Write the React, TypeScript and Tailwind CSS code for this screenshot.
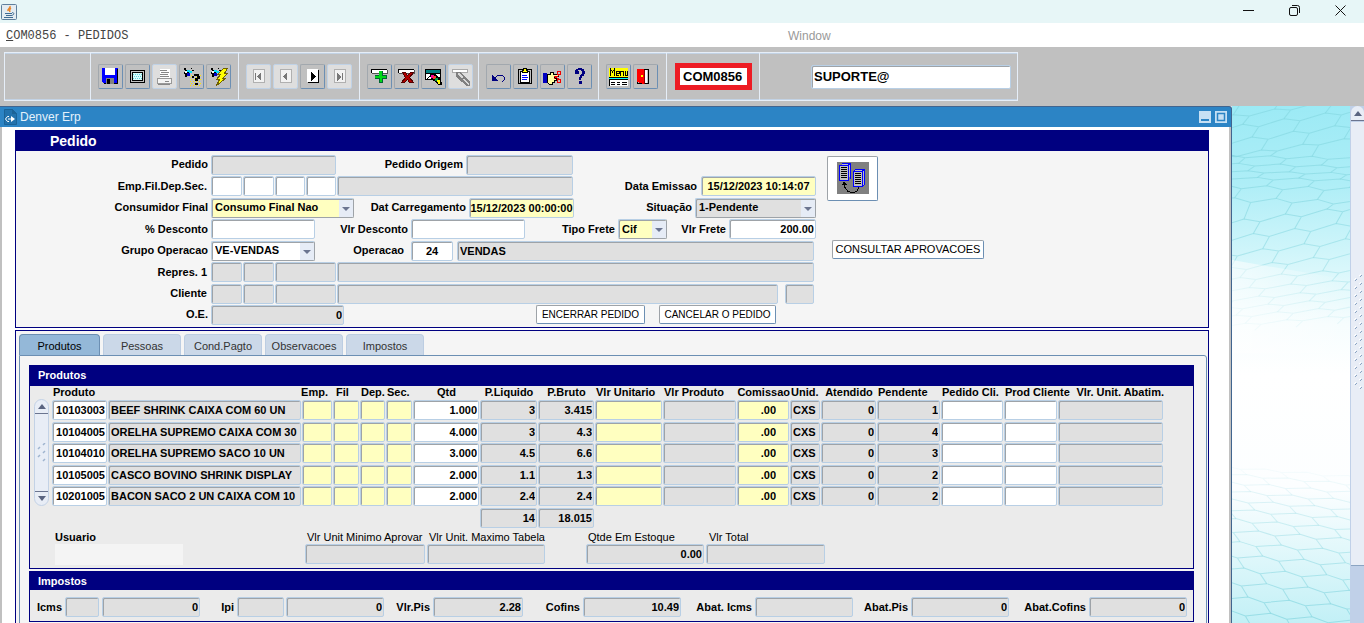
import { useState } from 'react';
import type { ReactNode } from 'react';
import clsx from 'clsx';

const fieldBase =
  'h-5 min-w-0 shrink-0 rounded-[2px] border border-[#b8cfe5] shadow-[inset_1px_1px_0_#9ea3a8] text-[11px] font-bold text-black outline-none';

const tones = {
  white: 'bg-white',
  gray: 'bg-[#e0e0e0]',
  yellow: 'bg-[#ffffc0]',
};

type FieldProps = {
  label: string;
  id?: string;
  value?: string;
  tone?: keyof typeof tones;
  className?: string;
};

function Field({ label, id, value = '', tone = 'gray', className }: FieldProps) {
  return (
    <input
      id={id}
      aria-label={id ? undefined : label}
      defaultValue={value}
      readOnly={tone === 'gray'}
      className={clsx(fieldBase, tones[tone], className)}
    />
  );
}

function Label({ htmlFor, className, children }: { htmlFor: string; className?: string; children: ReactNode }) {
  return (
    <label htmlFor={htmlFor} className={clsx('shrink-0 whitespace-nowrap pr-[3px] text-right text-[11px] font-bold', className)}>
      {children}
    </label>
  );
}

function Select({ id, value, tone = 'white', className }: { id: string; value: string; tone?: keyof typeof tones; className?: string }) {
  return (
    <div className={clsx('relative shrink-0', className)}>
      <select id={id} className={clsx(fieldBase, tones[tone], 'block w-full appearance-none border-r-[#9ea3a8] border-b-[#9ea3a8] pl-[3px]')}>
        <option>{value}</option>
      </select>
      <svg className="pointer-events-none absolute top-[2px] right-px h-[17px] w-[14px]" viewBox="0 0 14 17">
        <path fill="#e6ecf6" d="M0 0h14v17H0z" />
        <path fill="#6b7590" d="M3 7h8l-4 4z" />
      </svg>
    </div>
  );
}

function PushButton({ children, className }: { children: ReactNode; className?: string }) {
  return (
    <button className={clsx('h-[19px] shrink-0 rounded-[2px] border border-[#9ea3a8] border-r-[#6c8fb3] border-b-[#6c8fb3] bg-white whitespace-nowrap', className)}>
      {children}
    </button>
  );
}

/* ---------- toolbar ---------- */

const torch = (
  <>
    <path fill="#000" d="M4 3h2v2h2v1h3v2h-2v2H7v2H5V9H4V7h1V5H4z" />
    <path fill="#00e0ff" d="M7 5h3v1h2v2H9V7H7z" />
    <path fill="#0000c8" d="M7 8h3v3H7z" />
    <path fill="#fff" d="M5 6h2v2H5z" />
    <path fill="#000" d="M11 3h1v1h-1zM12 5h2v1h-2z" />
  </>
);

const record = (
  <>
    <path fill="#fff" d="M4 5h15v3H4z" />
    <path fill="none" stroke="#000" d="M3.500 8V4.500H19" />
    <path fill="none" stroke="#555" d="M4 8.500h15V5" />
  </>
);

const icons: Record<string, ReactNode> = {
  Salvar: (
    <>
      <path fill="#00f" d="M3 3h16v16H5l-2-2z" />
      <path fill="#000" d="M18 4h1v15H5v-1h13z" />
      <path fill="#fff" d="M6 3h10v7H6z" />
      <path fill="#808080" d="M7 13h8v6H7z" />
      <path fill="#000" d="M8 14h3v5H8z" />
    </>
  ),
  Tela: (
    <>
      <path fill="#c0c0c0" stroke="#000" d="M4.500 5.500h14v12h-14z" />
      <path fill="#d8fcfc" stroke="#000" d="M6.500 7.500h10v8h-10z" />
      <path stroke="#60d0dc" strokeDasharray="1 1" d="M7 9.500h9M8 11.500h8M7 13.500h9" />
    </>
  ),
  Imprimir: (
    <>
      <path fill="#fff" d="M7 4h10v9H7z" />
      <path stroke="#888" fill="none" d="M7 5.500h7M8 7.500h8M7 9.500h8M7 11.500h9" />
      <path fill="#f4f4f4" stroke="#999" d="M4.500 13.500h14v5h-14z" />
      <path stroke="#888" d="M12 16.500h4M5 19.500h12" />
    </>
  ),
  'Entrar consulta': (
    <>
      {torch}
      <path stroke="#ffe800" strokeDasharray="1 2" d="M11 10.500h11M10 12.500h12M11 14.500h11M10 16.500h12M11 18.500h11M10 20.500h12" />
      <path fill="#000" d="M12 11h2V9h5v2h1v3h-2v2h-3v-3h2v-2h-3v2h-2zM15 18h3v2h-3z" />
    </>
  ),
  'Executar consulta': (
    <>
      {torch}
      <path fill="#ff0" stroke="#706000" d="M16.500 3.500h4l-3 5h3l-5 5h3l-9 7 3-6h-3l4-5h-3z" />
    </>
  ),
  Primeiro: (
    <>
      <path fill="#f2f2f2" stroke="#b0b0b0" d="M6.500 4.500h11v13h-11z" />
      <path fill="#777" d="M8 8h1v7H8zM14 7v9l-4-4z" />
    </>
  ),
  Anterior: (
    <>
      <path fill="#f2f2f2" stroke="#b0b0b0" d="M6.500 4.500h11v13h-11z" />
      <path fill="#777" d="M13 7v9l-4-4z" />
    </>
  ),
  Seguinte: (
    <>
      <path fill="#fff" d="M6 4h11v13H6z" />
      <path stroke="#000" fill="none" d="M7 17.500h10.500V5" />
      <path fill="#000" d="M10 7v9l5-4z" />
    </>
  ),
  Ultimo: (
    <>
      <path fill="#f2f2f2" stroke="#b0b0b0" d="M6.500 4.500h11v13h-11z" />
      <path fill="#777" d="M14 8h1v7h-1zM9 7v9l4-4z" />
    </>
  ),
  Inserir: (
    <>
      {record}
      <path fill="#063" d="M11 6h4v4h4v4h-4v4h-4v-4H7v-4h4z" />
      <path fill="#00d818" d="M11 6h3v5h4v2h-4v4h-2v-4H7v-2h4z" />
    </>
  ),
  Remover: (
    <>
      {record}
      <path fill="#b00000" stroke="#500" d="M7.500 7.500h3l2 3 3-3h3l-4 5 4 5h-4l-2-3-3 3h-3l4-5z" />
    </>
  ),
  Bloquear: (
    <>
      <path fill="#fff" stroke="#000" d="M3.500 4.500h15v10h-15z" />
      <path fill="#008080" d="M4 5h14v3H4z" />
      <path stroke="#000" fill="none" d="M4 8.500h14M5 14l5-5" />
      <path fill="#000" d="M8 9h6l2 3 3 1 1 7h-4l-3-4-4-1z" />
      <path fill="#ff00a0" d="M9 10h3v3H9z" />
      <path fill="#f33" d="M11 11h3v3h-3z" />
      <path fill="#00a040" d="M13 13h3v3h-3z" />
      <path fill="#ff0" d="M15 15h3v4h-2z" />
    </>
  ),
  Limpar: (
    <>
      <path fill="#fff" stroke="#aaa" d="M3.500 4.500h15v3h-15z" />
      <path fill="#808080" d="M7 7h5l9 10v4h-3L7 12z" />
      <path fill="#d8d8d8" d="M9 8h2l3 4-1 1-4-3zM14 14l1-1 5 6v1h-1z" />
    </>
  ),
  Desfazer: (
    <>
      <path stroke="#000080" fill="none" d="M8 13l3-3h4l2 2v3l-2 2" />
      <path fill="#000080" d="M5 10v6h6v-1l-2-1-3-4z" />
    </>
  ),
  Colar: (
    <>
      <rect x="4.500" y="4.500" width="13" height="14" rx="1" fill="#c0c0c0" stroke="#000" />
      <path fill="#fff" stroke="#000" d="M6.500 6.500h9v11h-9z" />
      <path fill="#ff0" stroke="#000" d="M8.500 5.500h1v-2h3v2h1v2h-5z" />
      <path stroke="#00f" d="M8 10.500h5M8 12.500h6M8 14.500h5" />
    </>
  ),
  Recortar: (
    <>
      <path fill="#0000c0" d="M2 8h4v10H2z" />
      <path fill="#ffffa0" stroke="#000" d="M6.500 9.500h3v-2h3v2h5v2h-4v2h2v2h-2v2h-2v2h-3l-2-2z" />
      <path stroke="#e00" fill="none" d="M13 11l5 3M13 14l5-4" />
      <circle cx="18" cy="8" r="2" fill="none" stroke="#e00" />
      <circle cx="18" cy="16" r="2" fill="none" stroke="#e00" />
    </>
  ),
  Ajuda: <path fill="#000080" d="M7 9V5h1V4h2V3h4v1h2v2h1v3h-1v2h-2v2h-1v2h-2v-3h1v-2h1V9h1V6h-1V5h-3v1h1v3zM11 16h3v3h-3z" />,
  Menu: (
    <>
      <path fill="#ff0" d="M2 3h19v9H2z" />
      <path fill="none" stroke="#000" d="M3.500 11V4l2 3 2-3v7M9 8.500h3v-2H9.500v4H12M13.500 11V6.500h3V11M18.500 6v4.500h2V6" />
      <path fill="#fff" d="M2 14h19v7H2z" />
      <path stroke="#0ff" d="M2 13.500h19" />
      <path stroke="#000" d="M2 12.500h19M2 14.500h19M2.500 15v6M4 17.500h4M10 17.500h3M15 17.500h5M4 19.500h4M10 19.500h3M15 19.500h5" />
    </>
  ),
  Sair: (
    <>
      <path fill="#c0c0c0" stroke="#000" d="M3.500 4.500h11v14h-11z" />
      <path fill="#fff" d="M11 5h2v13h-2z" />
      <path fill="red" d="M3 4h7v15l-7-2z" />
      <path stroke="#800" d="M10.500 5v14" />
      <path fill="#ff0" d="M7 10h2v2H7z" />
    </>
  ),
};

const toolGroups = [
  { width: 'w-[148px]', names: ['Salvar', 'Tela', 'Imprimir', 'Entrar consulta', 'Executar consulta'] },
  { width: 'w-[121px]', names: ['Primeiro', 'Anterior', 'Seguinte', 'Ultimo'] },
  { width: 'w-[119px]', names: ['Inserir', 'Remover', 'Bloquear', 'Limpar'] },
  { width: 'w-[120px]', names: ['Desfazer', 'Colar', 'Recortar', 'Ajuda'] },
  { width: 'w-[68px]', names: ['Menu', 'Sair'] },
];

const disabledTools = ['Imprimir', 'Primeiro', 'Anterior', 'Ultimo', 'Limpar'];

function Toolbar() {
  return (
    <div className="h-[59px] shrink-0 bg-[#c0c0c0] px-1 pt-[5px]">
      <div className="flex h-[49px] w-fit items-stretch divide-x divide-[#e6eef8] border border-[#e6eef8] shadow-[inset_0_1px_0_#c2d2e4,inset_0_-1px_0_#c2d2e4]">
        <div className="w-[86px]" />
        {toolGroups.map((group) => (
          <div key={group.names[0]} className={clsx('flex items-center gap-[2px] pl-[7px]', group.width)}>
            {group.names.map((name) => {
              const disabled = disabledTools.includes(name);
              return (
                <button
                  key={name}
                  title={name}
                  disabled={disabled}
                  className={clsx(
                    'size-[25px] shrink-0 rounded-[2px] border',
                    disabled
                      ? 'border-[#c0d2e6] bg-[#dedede]'
                      : 'border-[#a2a8ae] border-r-[#6c8fb3] border-b-[#6c8fb3] bg-[#c0c0c0]'
                  )}
                >
                  <svg viewBox="0 0 23 23" className="size-[23px]" shapeRendering="crispEdges">
                    {icons[name]}
                  </svg>
                </button>
              );
            })}
          </div>
        ))}
        <div className="flex w-[93px] items-center pl-2">
          <input
            aria-label="Programa"
            defaultValue="COM0856"
            className="h-[27px] w-[77px] border-5 border-[#ed1c24] bg-white pl-[3px] text-[13px] font-bold outline-none"
          />
        </div>
        <div className="flex w-[257px] items-center justify-end pr-[6px]">
          <input
            aria-label="Usuario conectado"
            defaultValue="SUPORTE@"
            className="h-6 w-[200px] rounded-[2px] border border-[#b8cfe5] bg-white pl-[2px] text-[13px] font-bold shadow-[inset_1px_1px_0_#9ea3a8] outline-none"
          />
        </div>
      </div>
    </div>
  );
}

/* ---------- order form ---------- */

function OrderForm() {
  return (
    <section className="border border-[#000080] bg-[#f5f5f5]">
      <h1 className="h-5 bg-[#000080] pl-[34px] text-[14px] leading-5 font-bold text-white">Pedido</h1>
      <div className="flex h-[176px] pt-[3px]">
        <div className="grid w-[800px] shrink-0 content-start grid-rows-[21px_22px_21px_22px_21px_22px_21px_21px]">
          <div className="flex items-center">
            <Label htmlFor="pedido" className="w-[195px]">Pedido</Label>
            <Field id="pedido" label="Pedido" className="w-[125px]" />
            <Label htmlFor="origem" className="w-[130px]">Pedido Origem</Label>
            <Field id="origem" label="Pedido Origem" className="w-[107px]" />
          </div>
          <div className="flex items-center gap-px">
            <Label htmlFor="emp" className="w-[194px]">Emp.Fil.Dep.Sec.</Label>
            <Field id="emp" label="Empresa" tone="white" className="w-[31px]" />
            <Field label="Filial" tone="white" className="w-[31px]" />
            <Field label="Deposito" tone="white" className="w-[30px]" />
            <Field label="Secao" tone="white" className="w-[30px]" />
            <Field label="Descricao da filial" className="w-[236px]" />
            <Label htmlFor="emissao" className="w-[126px]">Data Emissao</Label>
            <Field id="emissao" label="Data Emissao" tone="yellow" value="15/12/2023 10:14:07" className="w-[115px] text-center" />
          </div>
          <div className="flex items-center">
            <Label htmlFor="consumidor" className="w-[195px]">Consumidor Final</Label>
            <Select id="consumidor" tone="yellow" value="Consumo Final Nao" className="w-[143px]" />
            <Label htmlFor="carregamento" className="w-[115px]">Dat Carregamento</Label>
            <Field id="carregamento" label="Dat Carregamento" tone="yellow" value="15/12/2023 00:00:00" className="w-[105px] text-center" />
            <Label htmlFor="situacao" className="w-[121px]">Situação</Label>
            <Select id="situacao" tone="gray" value="1-Pendente" className="w-[121px]" />
          </div>
          <div className="flex items-center">
            <Label htmlFor="desconto" className="w-[195px]">% Desconto</Label>
            <Field id="desconto" label="% Desconto" tone="white" className="w-[104px]" />
            <Label htmlFor="vlrdesconto" className="w-[96px]">Vlr Desconto</Label>
            <Field id="vlrdesconto" label="Vlr Desconto" tone="white" className="w-[114px]" />
            <Label htmlFor="tipofrete" className="w-[93px]">Tipo Frete</Label>
            <Select id="tipofrete" tone="yellow" value="Cif" className="w-[49px]" />
            <Label htmlFor="vlrfrete" className="w-[62px]">Vlr Frete</Label>
            <Field id="vlrfrete" label="Vlr Frete" tone="white" value="200.00" className="w-[87px] pr-px text-right" />
          </div>
          <div className="flex items-center">
            <Label htmlFor="grupo" className="w-[195px]">Grupo Operacao</Label>
            <Select id="grupo" value="VE-VENDAS" className="w-[104px]" />
            <Label htmlFor="operacao" className="mr-1 w-[92px]">Operacao</Label>
            <Field id="operacao" label="Operacao" tone="white" value="24" className="mr-1 w-[42px] text-center" />
            <Field label="Descricao da operacao" value="VENDAS" className="w-[357px] pl-[2px]" />
          </div>
          <div className="flex items-center gap-px">
            <Label htmlFor="repres" className="w-[194px]">Repres. 1</Label>
            <Field id="repres" label="Repres. 1" className="w-[31px]" />
            <Field label="Filial do representante" className="w-[31px]" />
            <Field label="Codigo do representante" className="w-[61px]" />
            <Field label="Nome do representante" className="w-[477px]" />
          </div>
          <div className="flex items-center gap-px">
            <Label htmlFor="cliente" className="w-[194px]">Cliente</Label>
            <Field id="cliente" label="Cliente" className="w-[31px]" />
            <Field label="Filial do cliente" className="w-[31px]" />
            <Field label="Codigo do cliente" className="w-[61px]" />
            <Field label="Nome do cliente" className="mr-[6px] w-[441px]" />
            <Field label="UF do cliente" className="w-[29px]" />
          </div>
          <div className="flex items-center">
            <Label htmlFor="oe" className="w-[195px]">O.E.</Label>
            <Field id="oe" label="O.E." value="0" className="mr-48 w-[133px] pr-px text-right" />
            <PushButton className="mr-[14px] w-[109px] text-[10px]">ENCERRAR PEDIDO</PushButton>
            <PushButton className="w-[117px] text-[10px]">CANCELAR O PEDIDO</PushButton>
          </div>
        </div>
        <div className="flex flex-col items-start pt-[2px] pl-[11px]">
          <button title="Copiar pedido" className="mb-[39px] flex h-[45px] w-[51px] justify-center rounded-[2px] border border-[#9ea3a8] border-r-[#6c8fb3] border-b-[#6c8fb3] bg-white pt-[5px]">
            <svg viewBox="0 0 32 32" className="size-8" shapeRendering="crispEdges">
              <path fill="#808080" d="M0 0h32v32H0z" />
              <path fill="#c0c0c0" stroke="#00f" d="M4.500 1.500h9v15M16.500 9.500l2-2h9v15l-2 2" />
              <path fill="#c0c0c0" stroke="#00f" d="M2.500 3.500h9v15h-9zM16.500 9.500h9v15h-9z" />
              <path stroke="#00f" d="M11 3.500l2-2M25 9.500l2-2" />
              <path stroke="#000" d="M4 5.500h6M4 7.500h6M4 9.500h6M4 11.500h6M4 13.500h6M4 15.500h6M18 11.500h6M18 13.500h6M18 15.500h6M18 17.500h6M18 19.500h6M18 21.500h6" />
              <path stroke="#000" fill="none" d="M7.500 20v5l3 4 4 1.500h3l3-2 1-3" />
              <path fill="#000" d="M7 19l3 4H5z" />
            </svg>
          </button>
          <PushButton className="ml-[5px] w-[152px] text-[11px]">CONSULTAR APROVACOES</PushButton>
        </div>
      </div>
    </section>
  );
}

/* ---------- products ---------- */

const columns: { title: string; width: string; tone: keyof typeof tones; align: string; head?: string }[] = [
  { title: 'Produto', width: 'w-[56px]', tone: 'white', align: 'pr-px text-right' },
  { title: '', width: 'w-[194px]', tone: 'gray', align: 'pl-[2px]' },
  { title: 'Emp.', width: 'w-[31px]', tone: 'yellow', align: '', head: 'justify-end pr-[5px]' },
  { title: 'Fil', width: 'w-[27px]', tone: 'yellow', align: '', head: 'pl-[3px]' },
  { title: 'Dep.', width: 'w-[26px]', tone: 'yellow', align: '' },
  { title: 'Sec.', width: 'w-[27px]', tone: 'yellow', align: '' },
  { title: 'Qtd', width: 'w-[67px]', tone: 'white', align: 'pr-px text-right', head: 'justify-center' },
  { title: 'P.Liquido', width: 'w-[58px]', tone: 'gray', align: 'pr-px text-right', head: 'justify-center' },
  { title: 'P.Bruto', width: 'w-[57px]', tone: 'gray', align: 'pr-px text-right', head: 'justify-center' },
  { title: 'Vlr Unitario', width: 'w-[68px]', tone: 'yellow', align: '' },
  { title: 'Vlr Produto', width: 'w-[74px]', tone: 'gray', align: '' },
  { title: 'Comissao', width: 'w-[53px]', tone: 'yellow', align: 'text-right pr-3', head: 'justify-end' },
  { title: 'Unid.', width: 'w-[31px]', tone: 'gray', align: 'pl-[2px]' },
  { title: 'Atendido', width: 'w-[56px]', tone: 'gray', align: 'pr-px text-right', head: 'justify-center' },
  { title: 'Pendente', width: 'w-[64px]', tone: 'gray', align: 'pr-px text-right' },
  { title: 'Pedido Cli.', width: 'w-[63px]', tone: 'white', align: '' },
  { title: 'Prod Cliente', width: 'w-[54px]', tone: 'white', align: '' },
  { title: 'Vlr. Unit. Abatim.', width: 'w-[106px]', tone: 'gray', align: '', head: 'justify-end' },
];

const products = [
  ['10103003', 'BEEF SHRINK CAIXA COM 60 UN', '', '', '', '', '1.000', '3', '3.415', '', '', '.00', 'CXS', '0', '1', '', '', ''],
  ['10104005', 'ORELHA SUPREMO CAIXA COM 30', '', '', '', '', '4.000', '3', '4.3', '', '', '.00', 'CXS', '0', '4', '', '', ''],
  ['10104010', 'ORELHA SUPREMO SACO 10 UN', '', '', '', '', '3.000', '4.5', '6.6', '', '', '.00', 'CXS', '0', '3', '', '', ''],
  ['10105005', 'CASCO BOVINO SHRINK DISPLAY', '', '', '', '', '2.000', '1.1', '1.3', '', '', '.00', 'CXS', '0', '2', '', '', ''],
  ['10201005', 'BACON SACO 2 UN CAIXA COM 10', '', '', '', '', '2.000', '2.4', '2.4', '', '', '.00', 'CXS', '0', '2', '', '', ''],
];

function GridScroll() {
  return (
    <div className="mt-[13px] mr-[3px] flex h-[107px] w-[15px] shrink-0 flex-col justify-between rounded-full border border-[#c3d2e6] bg-[#e8edf6]">
      <button aria-label="Subir" className="flex h-[14px] items-center justify-center border-b border-[#6b7590]">
        <svg viewBox="0 0 8 5" className="h-[5px] w-2"><path fill="#5a6480" d="M0 5h8L4 0z" /></svg>
      </button>
      <svg viewBox="0 0 12 20" className="h-5 w-3" stroke="#9fb4cf" strokeWidth="1.500">
        <path d="M8 2l2-2M3 6l2-2M8 10l2-2M3 14l2-2M8 18l2-2" />
      </svg>
      <button aria-label="Descer" className="flex h-[14px] items-center justify-center border-t border-[#6b7590]">
        <svg viewBox="0 0 8 5" className="h-[5px] w-2"><path fill="#5a6480" d="M0 0h8L4 5z" /></svg>
      </button>
    </div>
  );
}

function Products() {
  return (
    <section className="border border-[#000080] bg-[#ebebeb]">
      <h2 className="h-5 bg-[#000080] pl-2 text-[11px] leading-[18px] font-bold text-white">Produtos</h2>
      <div className="flex pl-1">
        <GridScroll />
        <table className="w-[1112px] shrink-0 table-fixed border-collapse">
          <thead>
            <tr className="h-[14px]">
              {columns.map((col) => (
                <th key={col.title} className={clsx('p-0 text-[11px] leading-[13px] font-bold whitespace-nowrap', col.width)}>
                  <div className={clsx('flex h-[14px] w-full', col.head ?? 'pl-px')}>{col.title}</div>
                </th>
              ))}
            </tr>
          </thead>
          <tbody>
            {products.map((row) => (
              <tr key={row[0]} className="odd:h-[22px] even:h-[21px]">
                {row.map((value, i) => (
                  <td key={i} className="p-0 pr-px align-top">
                    <Field
                      label={columns[i].title || 'Descricao'}
                      tone={columns[i].tone}
                      value={value}
                      className={clsx('block w-full', columns[i].align)}
                    />
                  </td>
                ))}
              </tr>
            ))}
          </tbody>
          <tfoot>
            <tr className="h-[22px]">
              <td colSpan={7} />
              <td className="p-0 pr-px align-top"><Field label="Total P.Liquido" value="14" className="block w-full pr-px text-right" /></td>
              <td className="p-0 pr-px align-top"><Field label="Total P.Bruto" value="18.015" className="block w-full pr-px text-right" /></td>
              <td colSpan={9} />
            </tr>
          </tfoot>
        </table>
      </div>
      <div className="flex pb-[3px] pl-[25px] text-[11px] leading-[14px]">
        <div className="mr-[122px] w-32">
          <div className="font-bold">Usuario</div>
          <div className="h-[21px] bg-[#f4f4f4]" />
        </div>
        <div className="mr-[2px] flex w-[120px] flex-col">
          <label htmlFor="minimo" className="pl-[2px] whitespace-nowrap">Vlr Unit Minimo Aprovar</label>
          <Field id="minimo" label="Vlr Unit Minimo Aprovar" />
        </div>
        <div className="mr-[41px] flex w-[118px] flex-col">
          <label htmlFor="maximo" className="pl-[2px] whitespace-nowrap">Vlr Unit. Maximo Tabela</label>
          <Field id="maximo" label="Vlr Unit. Maximo Tabela" />
        </div>
        <div className="mr-[2px] flex w-[118px] flex-col">
          <label htmlFor="estoque" className="pl-[2px]">Qtde Em Estoque</label>
          <Field id="estoque" label="Qtde Em Estoque" value="0.00" className="pr-px text-right" />
        </div>
        <div className="flex w-[119px] flex-col">
          <label htmlFor="total" className="pl-[3px]">Vlr Total</label>
          <Field id="total" label="Vlr Total" />
        </div>
      </div>
    </section>
  );
}

function Taxes() {
  return (
    <section className="mt-[2px] border border-[#000080] bg-[#ebebeb]">
      <h2 className="h-[18px] bg-[#000080] pl-2 text-[11px] leading-[18px] font-bold text-white">Impostos</h2>
      <div className="flex h-[31px] items-center pt-[3px]">
        <Label htmlFor="icms" className="w-[35px]">Icms</Label>
        <Field id="icms" label="Icms" className="mr-[3px] w-[34px]" />
        <Field label="Valor Icms" value="0" className="w-[98px] pr-px text-right" />
        <Label htmlFor="ipi" className="w-[37px]">Ipi</Label>
        <Field id="ipi" label="Ipi" className="mr-[2px] w-[47px]" />
        <Field label="Valor Ipi" value="0" className="w-[98px] pr-px text-right" />
        <Label htmlFor="pis" className="w-[49px]">Vlr.Pis</Label>
        <Field id="pis" label="Vlr.Pis" value="2.28" className="w-[90px] pr-px text-right" />
        <Label htmlFor="cofins" className="w-[60px]">Cofins</Label>
        <Field id="cofins" label="Cofins" value="10.49" className="w-[98px] pr-px text-right" />
        <Label htmlFor="abicms" className="w-[74px]">Abat. Icms</Label>
        <Field id="abicms" label="Abat. Icms" className="w-[98px]" />
        <Label htmlFor="abpis" className="w-[58px]">Abat.Pis</Label>
        <Field id="abpis" label="Abat.Pis" value="0" className="w-[98px] pr-px text-right" />
        <Label htmlFor="abcofins" className="w-[80px]">Abat.Cofins</Label>
        <Field id="abcofins" label="Abat.Cofins" value="0" className="w-[98px] pr-px text-right" />
      </div>
    </section>
  );
}

const tabs = [
  { name: 'Produtos', width: 'w-[81px]' },
  { name: 'Pessoas', width: 'w-[78px]' },
  { name: 'Cond.Pagto', width: 'w-[78px]' },
  { name: 'Observacoes', width: 'w-[78px]' },
  { name: 'Impostos', width: 'w-[78px]' },
];

function Details() {
  const [active, setActive] = useState('Produtos');

  return (
    <section className="mt-[2px] flex-1 border border-b-0 border-[#000080] bg-[#f5f5f5] px-[3px] pt-[3px]">
      <div role="tablist" className="flex gap-[3px]">
        {tabs.map((tab) => (
          <button
            key={tab.name}
            role="tab"
            aria-selected={active === tab.name}
            onClick={() => setActive(tab.name)}
            className={clsx(
              'h-[21px] rounded-t-[4px] border border-b-0 pt-[2px] text-[11px]',
              tab.width,
              active === tab.name ? 'border-[#6c8fb3] bg-[#94b8d8] text-black' : 'border-[#bccde2] bg-[#cbd8e8] text-[#333]'
            )}
          >
            {tab.name}
          </button>
        ))}
      </div>
      <div className="-mr-[2px] h-full rounded-tr-[3px] border border-[#6c8fb3] pt-[9px] pr-[12px] pl-[9px]">
        <Products />
        <Taxes />
      </div>
    </section>
  );
}

/* ---------- desktop ---------- */

const upperRows = [-20, 20, 53, 95, 138, 168, 193, 215, 234, 258, 296, 340, 386, 436, 480, 520, 552, 580, 606, 632, 658, 682];
const lowerRows = [1112, 1134, 1158, 1184, 1210, 1238, 1268, 1300, 1336, 1374, 1414, 1456, 1500, 1544, 1590];

// one zigzag per row, its low corners tied to the high corners of the next row
function honeycomb(rows: number[], tiltAt: (y: number) => number, lean: number) {
  const period = 124;
  const cell = 48;
  let start = -240;

  return rows.slice(0, -1).map((y, r) => {
    const next = rows[r + 1];
    const drop = (next - y) * 0.3;
    const at = (rowY: number, x: number) => Math.round(rowY + tiltAt(rowY) * (x - 333));
    let d = '';
    for (let x = start; x < 560; x += period) {
      const lowX = x + cell;
      const lowY = at(y, lowX) + Math.round(drop);
      d += `M${x} ${at(y, x)}L${lowX} ${lowY}L${x + period} ${at(y, x + period)}`;
      d += `M${lowX} ${lowY}L${lowX + lean} ${at(next, lowX + lean)}`;
    }
    start += cell + lean;
    if (start > 0) start -= period;
    return d;
  });
}

const upper = honeycomb(upperRows, (y) => (y < 150 ? -0.14 : y < 320 ? 0.02 : y < 500 ? -0.12 : -0.08), -20);
const lower = honeycomb(lowerRows, () => 0.08, 20);

function Wallpaper() {
  return (
    <div className="w-[118px] shrink-0 overflow-hidden">
      <svg viewBox="156 18 354 1550" preserveAspectRatio="xMinYMin slice" className="size-full" fill="none">
        <defs>
          <linearGradient id="sky" x1="0" y1="0" x2="0" y2="1">
            <stop offset="0" stopColor="#9ceaf5" />
            <stop offset=".15" stopColor="#aeeef7" />
            <stop offset=".28" stopColor="#cff5fa" />
            <stop offset=".42" stopColor="#f6fdfe" />
            <stop offset=".52" stopColor="#fff" />
            <stop offset=".74" stopColor="#fcfeff" />
            <stop offset="1" stopColor="#c2f0f6" />
          </linearGradient>
          <linearGradient id="haze" x1="0" y1="0" x2="1" y2="0">
            <stop offset="0" stopColor="#fff" stopOpacity=".6" />
            <stop offset="1" stopColor="#fff" stopOpacity="0" />
          </linearGradient>
        </defs>
        <path fill="url(#sky)" d="M156 18h354v1550H156z" />
        <g stroke="#7fd3dd" strokeWidth="3">
          {upper.map((d, i) => (
            <path key={i} d={d} opacity={i < 12 ? 0.55 : 0.55 - (i - 11) * 0.045} />
          ))}
          {lower.map((d, i) => (
            <path key={i} d={d} opacity={0.06 + i * 0.045} />
          ))}
        </g>
        <path fill="url(#haze)" d="M156 480l354 60v220H156z" />
      </svg>
    </div>
  );
}

function PageScroll() {
  return (
    <div className="flex w-[14px] shrink-0 flex-col border-l border-[#c0d0e8] bg-[#c0d0e8]">
      <button aria-label="Rolar para cima" className="flex h-[15px] shrink-0 items-center justify-center rounded-t-lg border-b border-[#6b7590] bg-[#e8edf6]">
        <svg viewBox="0 0 8 5" className="h-[5px] w-2"><path fill="#5a6480" d="M0 5h8L4 0z" /></svg>
      </button>
      <div className="mt-px flex h-[444px] shrink-0 flex-col items-center border-b border-[#8ba4c2] bg-[#e8edf6] pt-[151px]">
        <svg viewBox="0 0 10 116" className="h-[116px] w-[10px]">
          <defs>
            <pattern id="grip" width="10" height="8" patternUnits="userSpaceOnUse">
              <path stroke="#fff" d="M6 3l2-2M1 7l2-2" />
              <path stroke="#8ba4c2" d="M7 4l2-2M2 8l2-2" />
            </pattern>
          </defs>
          <path fill="url(#grip)" d="M0 0h10v116H0z" />
        </svg>
      </div>
    </div>
  );
}

export default function App() {
  return (
    <div className="flex h-screen flex-col overflow-hidden bg-white font-['Liberation_Sans',Arial,sans-serif] text-black">
      <header className="flex h-[23px] shrink-0 items-center bg-[#e7f6f7] pl-px">
        <svg viewBox="0 0 16 16" className="size-4">
          <rect x=".5" y=".5" width="15" height="15" rx="1" fill="#e4ecf2" stroke="#5f7f9c" />
          <path fill="none" stroke="#e8862c" strokeWidth="1.500" d="M9 2c1 2-3 3-2 5M10 4c-2 1-2 2-1 4" />
          <path fill="none" stroke="#3f6c94" d="M4 9.500h7M5 11.500h5M11 8.500c3 0 2 3-1 3M3 13.500h9" />
        </svg>
        <div className="ml-auto flex items-center gap-[35px] pr-[18px] pb-[2px]">
          <button aria-label="Minimizar">
            <svg viewBox="0 0 11 11" className="size-[11px]"><path stroke="#111" d="M0 5.500h11" /></svg>
          </button>
          <button aria-label="Restaurar">
            <svg viewBox="0 0 11 11" className="size-[11px]" fill="none" stroke="#111">
              <rect x=".5" y="2.500" width="8" height="8" rx="1.500" />
              <path d="M3 .5h5.500a2 2 0 0 1 2 2V8" />
            </svg>
          </button>
          <button aria-label="Fechar">
            <svg viewBox="0 0 11 11" className="size-[11px]"><path stroke="#111" d="M.5.5l10 10M10.500.5l-10 10" /></svg>
          </button>
        </div>
      </header>
      <nav className="flex h-6 shrink-0 items-center pt-px pl-[6px] text-[12px]">
        <button className="w-[782px] text-left font-['Liberation_Mono',monospace] text-[#444]">
          <span className="underline">C</span>OM0856 - PEDIDOS
        </button>
        <button className="text-[#999]">Window</button>
      </nav>
      <Toolbar />
      <main className="flex min-h-0 flex-1">
        <div className="flex min-w-0 flex-1 flex-col rounded-tr-[3px] border-t border-r border-[#41658f] bg-[#2c84c5]">
          <div className="flex h-5 shrink-0 items-center pr-1 pl-1">
            <svg viewBox="0 0 13 16" className="mr-[3px] h-4 w-[13px]">
              <path fill="#2272ad" stroke="#1b6398" d="M.5.5h8l4 4v11H.5z" />
              <path fill="#1b6398" d="M8 0l5 5H8z" />
              <path fill="none" stroke="#fff" d="M5 7.500H3.500l-2 2.500 2 2.500H5M4 10h3" />
              <path fill="#fff" d="M7 7l4 3-4 3z" />
            </svg>
            <h2 className="flex-1 text-[12px] text-[#e4f1fb]">Denver Erp</h2>
            <div className="flex gap-1">
              <button aria-label="Minimizar janela">
                <svg viewBox="0 0 12 12" className="size-3"><path fill="#c6e0f4" d="M0 0h12v12H0z" /><path fill="#2c84c5" d="M2 8h8v2H2z" /></svg>
              </button>
              <button aria-label="Maximizar janela">
                <svg viewBox="0 0 12 12" className="size-3"><path fill="#c6e0f4" d="M0 0h12v12H0z" /><path fill="none" stroke="#2c84c5" strokeWidth="1.500" d="M2.500 2.500h7v7h-7z" /></svg>
              </button>
            </div>
          </div>
          <div className="flex min-h-0 flex-1 flex-col border-x-2 border-[#c0c0c0] bg-white pt-[3px] pr-5 pl-[13px]">
            <OrderForm />
            <Details />
          </div>
        </div>
        <Wallpaper />
        <PageScroll />
      </main>
    </div>
  );
}
